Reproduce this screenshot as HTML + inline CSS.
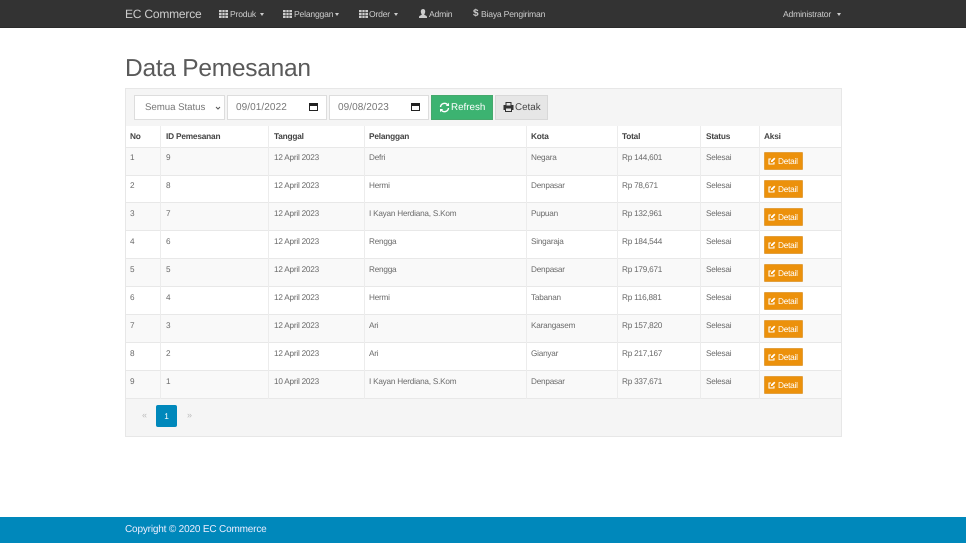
<!DOCTYPE html>
<html><head><meta charset="utf-8"><title>Data Pemesanan</title>
<style>
*{box-sizing:border-box}
html,body{margin:0;padding:0;width:966px;height:543px;overflow:hidden;background:#fff;font-family:"Liberation Sans",Arial,sans-serif;color:#555;text-rendering:geometricPrecision}
.a{position:absolute;white-space:nowrap}
.nav{left:0;top:0;width:966px;height:28px;background:#333;border-bottom:1px solid #2b2b2b}
.n{top:8px;font-size:8.6px;line-height:12px;color:#ccc;letter-spacing:-.2px}
.caret{position:absolute;width:0;height:0;border-left:2.5px solid transparent;border-right:2.5px solid transparent;border-top:3px solid #ccc;top:13px}
.panel{left:125px;top:88px;width:717px;height:349px;background:#f5f5f5;border:1px solid #e7e7e7}
.ctl{top:95px;height:25px;background:#fff;border:1px solid #ddd;font-size:10px;line-height:24px;color:#777}
.btn{top:95px;height:25px;font-size:9.800px;line-height:24px}
.tbl{left:126px;top:126px;width:715px;height:273px;background:#fff}
.row{position:absolute;left:0;width:715px;border-top:1px solid #e8e8e8}
.row.odd{background:#f9f9f9}
.v{position:absolute;top:126px;width:1px;height:273px;background:#ececec}
.t{position:absolute;font-size:8.200px;line-height:11px;color:#6b6b6b;white-space:nowrap;letter-spacing:-.22px}
.h{font-weight:bold;color:#444;font-size:8.300px;letter-spacing:-.2px}
.d{position:absolute;left:638px;width:39px;height:18px;background:#ec910b;border:1px solid #e2a03f;border-radius:1px;color:#fff;font-size:8.300px;line-height:16px;padding-left:13px;letter-spacing:-.25px}
.d svg{position:absolute;left:3px;top:4px}
</style></head><body>
<svg width="0" height="0" style="position:absolute"><defs>
<symbol id="e" viewBox="0 0 8 8"><path d="M6 5v2H1V2h2" fill="none" stroke="#fff" stroke-width="1.100"/><path d="M3 3.600L6.200.6l1.200 1.200L4.400 5H3z" fill="#fff"/></symbol>
<symbol id="g" viewBox="0 0 9 8"><path d="M0 0h9v8H0z" fill="#ccc"/><path d="M3 0v8M6 0v8M0 2.600h9M0 5.300h9" stroke="#333" stroke-width=".7"/></symbol>
<symbol id="c" viewBox="0 0 10 10"><path d="M.5 1.500h8v7h-8z" fill="none" stroke="#222"/><path d="M0 1h9v3H0z" fill="#222"/></symbol>
</defs></svg>
<div class="a nav"></div>
<div class="a" style="left:125px;top:6px;font-size:12px;line-height:16px;color:#ccc;letter-spacing:-.2px">EC Commerce</div>

<svg class="a" style="left:219px;top:10px" width="9" height="8"><use href="#g"/></svg>
<div class="a n" style="left:230px">Produk</div><i class="caret" style="left:260px"></i>
<svg class="a" style="left:283px;top:10px" width="9" height="8"><use href="#g"/></svg>
<div class="a n" style="left:294px">Pelanggan</div><i class="caret" style="left:335px"></i>
<svg class="a" style="left:359px;top:10px" width="9" height="8"><use href="#g"/></svg>
<div class="a n" style="left:369px">Order</div><i class="caret" style="left:394px"></i>
<svg class="a" style="left:419px;top:9px" width="8" height="9"><path d="M4 0c1.500 0 2.200 1.100 2.200 2.500S5.500 5 5.200 5.600c.3.600 2.800 1 2.800 2.400v1H0V8c0-1.400 2.500-1.800 2.800-2.400C2.500 5 1.800 3.900 1.800 2.500S2.500 0 4 0z" fill="#ccc"/></svg>
<div class="a n" style="left:429px">Admin</div>
<div class="a" style="left:473px;top:7px;font-size:10px;line-height:13px;font-weight:bold;color:#ccc">$</div>
<div class="a n" style="left:481px">Biaya Pengiriman</div>
<div class="a n" style="left:783px">Administrator</div><i class="caret" style="left:837px"></i>

<div class="a" style="left:125px;top:53px;font-size:24.500px;line-height:32px;color:#5a5a5a;letter-spacing:-.25px">Data Pemesanan</div>

<div class="a panel"></div>
<div class="a ctl" style="left:134px;width:91px;padding-left:10px;font-size:9.700px;letter-spacing:-.05px">Semua Status
<svg class="a" style="left:80px;top:10px" width="7" height="5"><path d="M1 1l2 2L5 1" fill="none" stroke="#555" stroke-width="1"/></svg></div>
<div class="a ctl" style="left:227px;width:100px;padding-left:8px;letter-spacing:.08px">09/01/2022
<svg class="a" style="left:81px;top:6px" width="10" height="10"><use href="#c"/></svg></div>
<div class="a ctl" style="left:329px;width:100px;padding-left:8px;letter-spacing:.08px">09/08/2023
<svg class="a" style="left:81px;top:6px" width="10" height="10"><use href="#c"/></svg></div>
<div class="a btn" style="left:431px;width:62px;background:#3cb371;border:1px solid #45a86c;color:#fff;padding-left:19px">Refresh
<svg class="a" style="left:7px;top:6px" width="11" height="11" viewBox="0 0 11 11"><path d="M1.500 5A4 4 0 0 1 8.500 2.700M9.500 6A4 4 0 0 1 2.500 8.300" fill="none" stroke="#fff" stroke-width="1.400"/><path d="M10 .8V4H6.800zM1 10.200V7h3.200z" fill="#fff"/></svg></div>
<div class="a btn" style="left:495px;width:53px;background:#e6e6e6;border:1px solid #d8d8d8;color:#444;padding-left:19px">Cetak
<svg class="a" style="left:7px;top:6px" width="11" height="10" viewBox="0 0 11 10"><path d="M2.500 0h6v3h2v5H9v2H2V8H.5V3h2zM3.500 1v2.500h4V1zM3 6.500V9h5V6.500z" fill="#333" fill-rule="evenodd"/></svg></div>

<div class="a tbl">
<div class="row odd" style="top:21px;height:28px"></div>
<div class="row" style="top:49px;height:27px"></div>
<div class="row odd" style="top:76px;height:28px"></div>
<div class="row" style="top:104px;height:28px"></div>
<div class="row odd" style="top:132px;height:28px"></div>
<div class="row" style="top:160px;height:28px"></div>
<div class="row odd" style="top:188px;height:28px"></div>
<div class="row" style="top:216px;height:28px"></div>
<div class="row odd" style="top:244px;height:29px;border-bottom:1px solid #e8e8e8"></div>

<div class="t h" style="left:4px;top:5px">No</div><div class="t h" style="left:40px;top:5px">ID Pemesanan</div><div class="t h" style="left:148px;top:5px">Tanggal</div><div class="t h" style="left:243px;top:5px">Pelanggan</div><div class="t h" style="left:405px;top:5px">Kota</div><div class="t h" style="left:496px;top:5px">Total</div><div class="t h" style="left:580px;top:5px">Status</div><div class="t h" style="left:638px;top:5px">Aksi</div>

<div class="t" style="left:4px;top:26px">1</div><div class="t" style="left:40px;top:26px">9</div><div class="t" style="left:148px;top:26px">12 April 2023</div><div class="t" style="left:243px;top:26px">Defri</div><div class="t" style="left:405px;top:26px">Negara</div><div class="t" style="left:496px;top:26px">Rp 144,601</div><div class="t" style="left:580px;top:26px">Selesai</div>
<div class="d" style="top:26px"><svg width="8" height="8"><use href="#e"/></svg>Detail</div>

<div class="t" style="left:4px;top:54px">2</div><div class="t" style="left:40px;top:54px">8</div><div class="t" style="left:148px;top:54px">12 April 2023</div><div class="t" style="left:243px;top:54px">Hermi</div><div class="t" style="left:405px;top:54px">Denpasar</div><div class="t" style="left:496px;top:54px">Rp 78,671</div><div class="t" style="left:580px;top:54px">Selesai</div>
<div class="d" style="top:54px"><svg width="8" height="8"><use href="#e"/></svg>Detail</div>

<div class="t" style="left:4px;top:82px">3</div><div class="t" style="left:40px;top:82px">7</div><div class="t" style="left:148px;top:82px">12 April 2023</div><div class="t" style="left:243px;top:82px">I Kayan Herdiana, S.Kom</div><div class="t" style="left:405px;top:82px">Pupuan</div><div class="t" style="left:496px;top:82px">Rp 132,961</div><div class="t" style="left:580px;top:82px">Selesai</div>
<div class="d" style="top:82px"><svg width="8" height="8"><use href="#e"/></svg>Detail</div>

<div class="t" style="left:4px;top:110px">4</div><div class="t" style="left:40px;top:110px">6</div><div class="t" style="left:148px;top:110px">12 April 2023</div><div class="t" style="left:243px;top:110px">Rengga</div><div class="t" style="left:405px;top:110px">Singaraja</div><div class="t" style="left:496px;top:110px">Rp 184,544</div><div class="t" style="left:580px;top:110px">Selesai</div>
<div class="d" style="top:110px"><svg width="8" height="8"><use href="#e"/></svg>Detail</div>

<div class="t" style="left:4px;top:138px">5</div><div class="t" style="left:40px;top:138px">5</div><div class="t" style="left:148px;top:138px">12 April 2023</div><div class="t" style="left:243px;top:138px">Rengga</div><div class="t" style="left:405px;top:138px">Denpasar</div><div class="t" style="left:496px;top:138px">Rp 179,671</div><div class="t" style="left:580px;top:138px">Selesai</div>
<div class="d" style="top:138px"><svg width="8" height="8"><use href="#e"/></svg>Detail</div>

<div class="t" style="left:4px;top:166px">6</div><div class="t" style="left:40px;top:166px">4</div><div class="t" style="left:148px;top:166px">12 April 2023</div><div class="t" style="left:243px;top:166px">Hermi</div><div class="t" style="left:405px;top:166px">Tabanan</div><div class="t" style="left:496px;top:166px">Rp 116,881</div><div class="t" style="left:580px;top:166px">Selesai</div>
<div class="d" style="top:166px"><svg width="8" height="8"><use href="#e"/></svg>Detail</div>

<div class="t" style="left:4px;top:194px">7</div><div class="t" style="left:40px;top:194px">3</div><div class="t" style="left:148px;top:194px">12 April 2023</div><div class="t" style="left:243px;top:194px">Ari</div><div class="t" style="left:405px;top:194px">Karangasem</div><div class="t" style="left:496px;top:194px">Rp 157,820</div><div class="t" style="left:580px;top:194px">Selesai</div>
<div class="d" style="top:194px"><svg width="8" height="8"><use href="#e"/></svg>Detail</div>

<div class="t" style="left:4px;top:222px">8</div><div class="t" style="left:40px;top:222px">2</div><div class="t" style="left:148px;top:222px">12 April 2023</div><div class="t" style="left:243px;top:222px">Ari</div><div class="t" style="left:405px;top:222px">Gianyar</div><div class="t" style="left:496px;top:222px">Rp 217,167</div><div class="t" style="left:580px;top:222px">Selesai</div>
<div class="d" style="top:222px"><svg width="8" height="8"><use href="#e"/></svg>Detail</div>

<div class="t" style="left:4px;top:250px">9</div><div class="t" style="left:40px;top:250px">1</div><div class="t" style="left:148px;top:250px">10 April 2023</div><div class="t" style="left:243px;top:250px">I Kayan Herdiana, S.Kom</div><div class="t" style="left:405px;top:250px">Denpasar</div><div class="t" style="left:496px;top:250px">Rp 337,671</div><div class="t" style="left:580px;top:250px">Selesai</div>
<div class="d" style="top:250px"><svg width="8" height="8"><use href="#e"/></svg>Detail</div>
</div>
<div class="v" style="left:160px"></div><div class="v" style="left:268px"></div><div class="v" style="left:364px"></div><div class="v" style="left:526px"></div><div class="v" style="left:617px"></div><div class="v" style="left:700px"></div><div class="v" style="left:759px"></div>

<div class="a" style="left:142px;top:410px;font-size:9px;line-height:11px;color:#bbb">«</div>
<div class="a" style="left:156px;top:405px;width:21px;height:22px;background:#0088bb;border-radius:2px;color:#fff;font-size:8.300px;line-height:22px;text-align:center">1</div>
<div class="a" style="left:187px;top:410px;font-size:9px;line-height:11px;color:#bbb">»</div>

<div class="a" style="left:0;top:517px;width:966px;height:26px;background:#0088bb"></div>
<div class="a" style="left:125px;top:523px;font-size:10px;line-height:14px;color:#eef;letter-spacing:-.17px">Copyright © 2020 EC Commerce</div>
</body></html>
